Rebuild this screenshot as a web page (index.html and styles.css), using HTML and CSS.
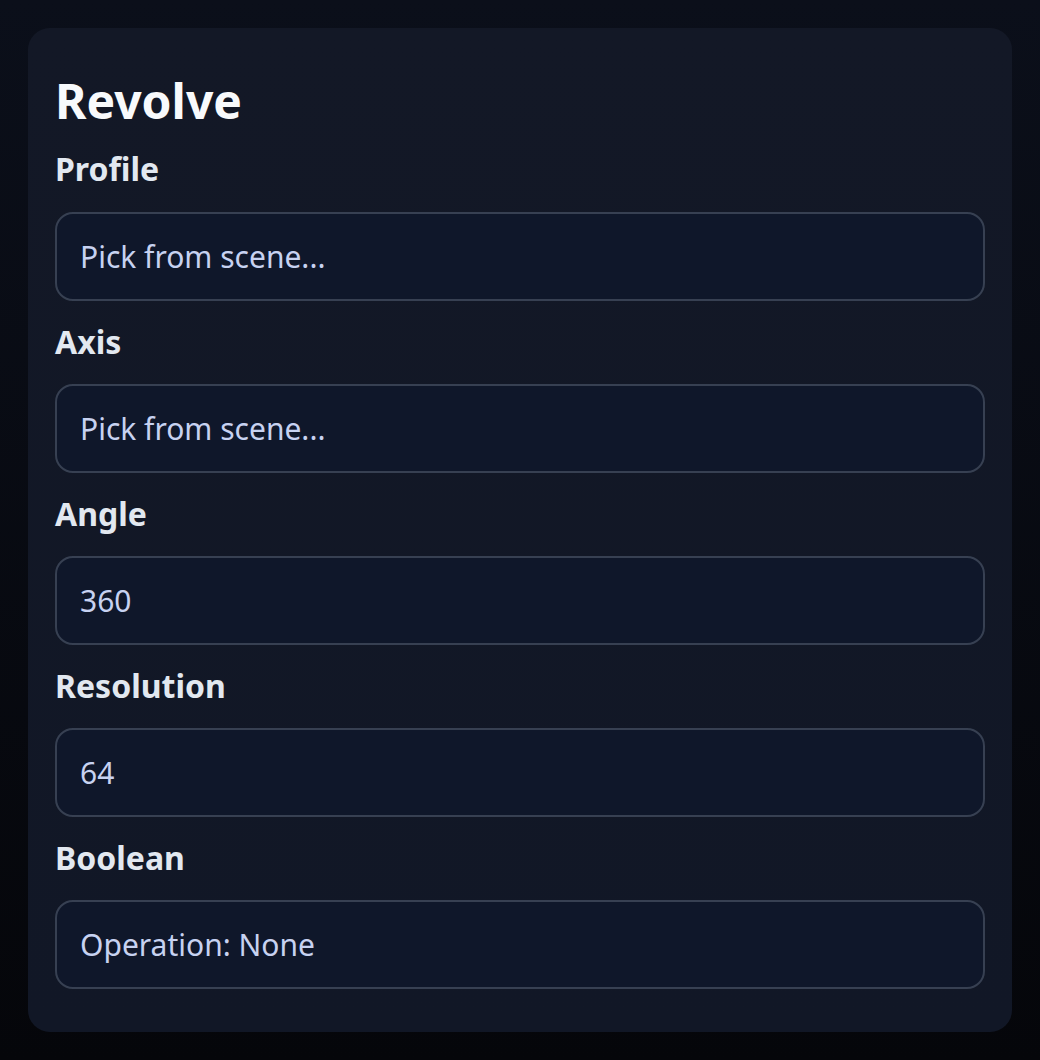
FILE: index.html
```html
<!DOCTYPE html>
<html lang="en">
<head>
    <meta charset="UTF-8">
    <meta name="viewport" content="width=device-width, initial-scale=1.0">
    <title>Revolve</title>
    <link rel="stylesheet" href="styles.css">
</head>
<body>
    <div class="panel">
        <h1>Revolve</h1>

        <label class="field">
            <span class="field-label">Profile</span>
            <input class="field-input" type="text" placeholder="Pick from scene...">
        </label>

        <label class="field">
            <span class="field-label">Axis</span>
            <input class="field-input" type="text" placeholder="Pick from scene...">
        </label>

        <label class="field">
            <span class="field-label">Angle</span>
            <input class="field-input" type="text" value="360">
        </label>

        <label class="field">
            <span class="field-label">Resolution</span>
            <input class="field-input" type="text" value="64">
        </label>

        <label class="field">
            <span class="field-label">Boolean</span>
            <div class="field-input">Operation: None</div>
        </label>
    </div>
</body>
</html>
```

FILE: styles.css
```css
html, body {
    height: 100%;
}

body {
    margin: 0;
    padding: 28px;
    box-sizing: border-box;
    font-family: "Noto Sans", "Open Sans", sans-serif;
    background: linear-gradient(180deg, #0b0f1a 0%, #05060a 100%);
}

.panel {
    display: flex;
    flex-direction: column;
    gap: 19px;
    padding: 42px 27px 43px 27px;
    background: linear-gradient(180deg, #131826 0%, #111726 100%);
    border-radius: 22px;
}

h1 {
    margin: 0 0 -4px;
    font-size: 48px;
    line-height: 1.3;
    font-weight: 700;
    color: #f8fafc;
}

.field {
    display: flex;
    flex-direction: column;
    gap: 21px;
}

.field-label {
    font-size: 32px;
    line-height: 1.35;
    font-weight: 700;
    color: #e2e8f0;
}

.field-input {
    box-sizing: border-box;
    height: 89px;
    width: 100%;
    padding: 0 23px;
    display: flex;
    align-items: center;
    font-family: inherit;
    font-size: 30px;
    color: #c7d2f1;
    background: #0f172a;
    border: 2px solid #374052;
    border-radius: 18px;
    outline: none;
}

.field-input::placeholder {
    color: #c7d2f1;
    opacity: 1;
}
```
